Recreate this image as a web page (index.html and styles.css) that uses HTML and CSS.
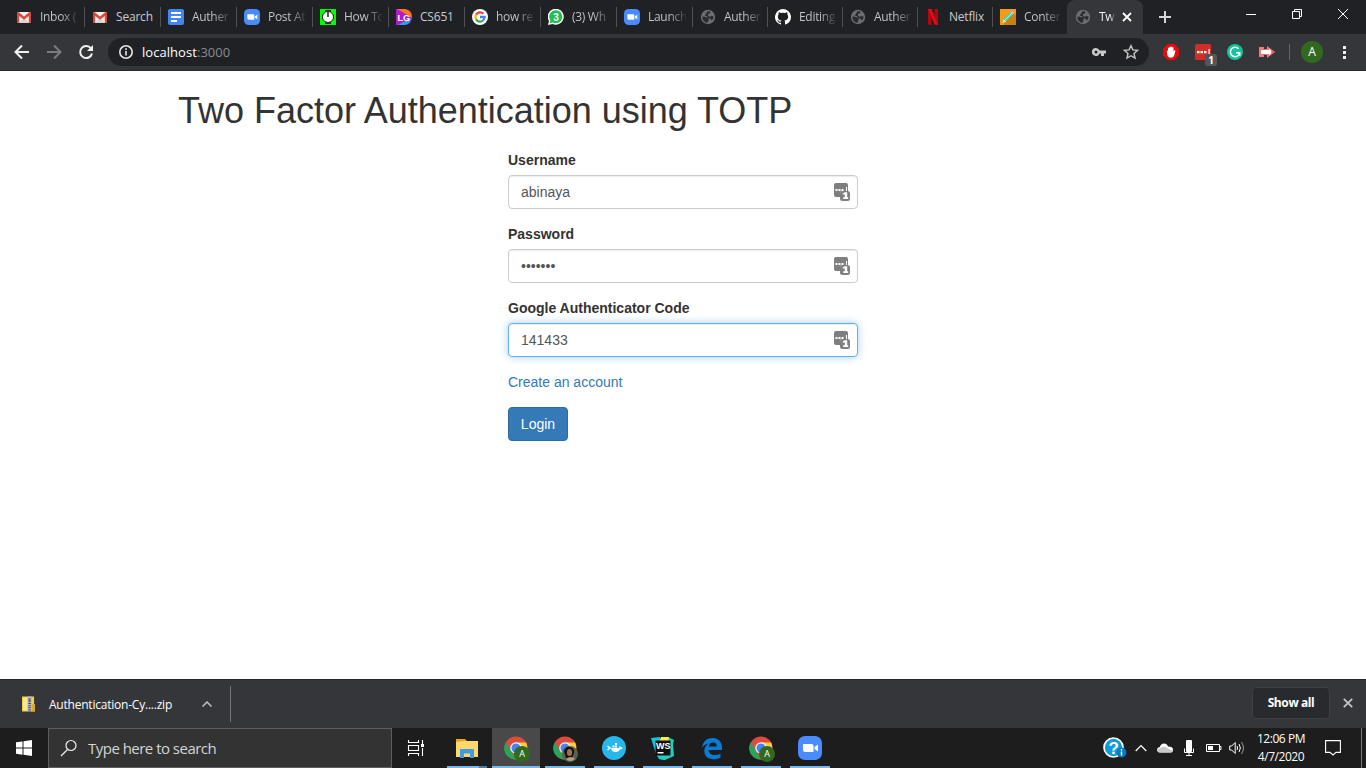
FILE: index.html
```html
<!DOCTYPE html>
<html lang="en">
<head>
<meta charset="utf-8">
<title>Two Factor Authentication</title>
<link rel="stylesheet" href="styles.css">
</head>
<body>
<svg class="defs" aria-hidden="true">
  <symbol id="gmail" viewBox="0 0 16 16"><path fill="#f3f0ef" d="M1 3h14v11H1z"/><path fill="#d9d4d3" d="M3 14l5-5 5 5z"/><path fill="#d54b3d" d="M1 14V3h1.500L8 7.500 13.500 3H15v11h-2.200V7L8 10.800 3.200 7v7z"/></symbol>
  <symbol id="zoomapp" viewBox="0 0 24 24"><rect width="24" height="24" rx="7" fill="#4a8cff"/><path fill="#fff" d="M5 8h8.500q2 0 2 2v6H7q-2 0-2-2zM16.500 11l3.500-2.500v7L16.500 13z"/></symbol>
  <symbol id="globe" viewBox="0 0 16 16"><circle cx="8" cy="8" r="7.200" fill="#6a6d71"/><path fill="#292b2f" d="M2.500 7.500c2 .2 2.500.2 4 .7 1.800.3 3 .8 2.200 2.300L7.500 13.800C4.500 13.500 2 11 2.500 7.500zM7.500 2.200l3 .3-.5 1.800-2 .7v1.700l1.500 1 2-.7 2 .5-.2 2-1.600 2-1.200-2-2-.6-1.500-1.700-2.200-.8z"/></symbol>
  <symbol id="chrome" viewBox="0 0 24 24"><circle cx="12" cy="12" r="11.500" fill="#dd4b3f"/><path fill="#26a65b" d="M2 6.300L8 17l4 6.500C3 23.500-3 14 2 6.300z"/><path fill="#ffcd40" d="M12 6.500h10.100c3.700 8-2 17-10.100 17l5-8.500z"/><circle cx="12" cy="12" r="5.800" fill="#f3f3f3"/><circle cx="12" cy="12" r="4.500" fill="#4285f4"/></symbol>
  <symbol id="lastpass" viewBox="0 0 16 18"><path fill="#7f7f7f" d="M2 0h10q2 0 2 2v6h-5.500q-2.500 0-2.500 2.500V14H2q-2 0-2-2V2q0-2 2-2z"/><rect x="6" y="8" width="10" height="10" rx="2.500" fill="#7f7f7f"/><path fill="#fff" d="M1.500 6h2v2h-2zM4.500 6h2v2h-2zM7.500 6h2v2h-2zM12 4h1v4h-1zM8.700 10.500l2-1.200h2.500v5h1v1.700h-5v-1.700h1.600v-2.800H8.700z"/></symbol>
</svg>

<header class="tabstrip">
  <div class="tab"><svg class="fav"><use href="#gmail"/></svg><span class="title">Inbox (</span></div>
  <div class="tab"><svg class="fav"><use href="#gmail"/></svg><span class="title plain">Search</span></div>
  <div class="tab"><svg class="fav" viewBox="0 0 16 16"><rect width="16" height="16" rx="2" fill="#4285f4"/><path fill="#fff" d="M3 3h10v2H3zM3 7h10v2H3zM3 11h6v2H3z"/></svg><span class="title">Auther</span></div>
  <div class="tab"><svg class="fav"><use href="#zoomapp"/></svg><span class="title">Post At</span></div>
  <div class="tab"><svg class="fav" viewBox="0 0 16 16"><path fill="#0f0" d="M0 0h16v16H0z"/><path fill="#333" d="M5 1h6v2l3 3v4l-3 3v2H5v-2l-3-3V6l3-3z"/><circle cx="8" cy="8" r="5" fill="#fff"/><path stroke="#222" stroke-width="1.500" d="M8 3v5"/></svg><span class="title">How To</span></div>
  <div class="tab"><svg class="fav" viewBox="0 0 16 16"><path fill="#b01ad0" d="M0 0h9q7 1 7 8t-7 8H0z"/><path fill="#ff7918" d="M1 0h8q7 1 7 9L8 4z"/><path fill="#17afe5" d="M2 16l13-7q-1 7-7 7z"/><text x="1.500" y="11.500" class="logo-text">LG</text></svg><span class="title plain">CS651</span></div>
  <div class="tab"><svg class="fav" viewBox="0 0 16 16"><circle cx="8" cy="8" r="8" fill="#fff"/><g fill="none" stroke-width="2.300"><path stroke="#ea4335" d="M4 5.700A4.600 4.600 0 0 1 11.300 4.800"/><path stroke="#fbbc05" d="M4 5.700a4.700 4.700 0 0 0 0 4.600"/><path stroke="#34a853" d="M4 10.300a4.600 4.600 0 0 0 7 1.200"/><path stroke="#4285f4" d="M8 8h4.600a4.600 4.600 0 0 1-1.600 3.500"/></g></svg><span class="title">how re</span></div>
  <div class="tab"><svg class="fav" viewBox="0 0 16 16"><path fill="#fff" d="M0 16l1-4A8 8 0 1 1 4.500 15z"/><path fill="#20bd50" d="M1.700 14.300l.8-2.700A6.500 6.500 0 1 1 4.700 13.500z"/><text x="5.200" y="11.800" class="count">3</text></svg><span class="title">(3) Wh</span></div>
  <div class="tab"><svg class="fav"><use href="#zoomapp"/></svg><span class="title">Launch</span></div>
  <div class="tab narrow"><svg class="fav"><use href="#globe"/></svg><span class="title">Auther</span></div>
  <div class="tab narrow"><svg class="fav" viewBox="0 0 16 16"><path fill="#fff" d="M8 0a8 8 0 0 0-2.500 15.600c.4.100.5-.2.500-.4v-1.500c-2.200.5-2.700-1-2.700-1-.3-.9-.9-1.200-.9-1.200-.7-.5.100-.5.100-.5.800.1 1.200.8 1.200.8.700 1.200 1.900.9 2.300.7.100-.5.300-.9.500-1.100-1.800-.2-3.600-.9-3.600-4 0-.9.300-1.600.8-2.100-.1-.2-.4-1 .1-2.100 0 0 .7-.2 2.200.8a8 8 0 0 1 4 0c1.500-1 2.200-.8 2.200-.8.400 1.100.2 1.900.1 2.100.5.600.8 1.300.8 2.100 0 3.100-1.900 3.700-3.700 3.900.3.300.6.800.6 1.500v2.400c0 .2.100.5.500.4A8 8 0 0 0 8 0z"/></svg><span class="title">Editing</span></div>
  <div class="tab narrow"><svg class="fav"><use href="#globe"/></svg><span class="title">Auther</span></div>
  <div class="tab narrow"><svg class="fav" viewBox="0 0 16 16"><path fill="#b20710" d="M3 0h3.500v16L3 15.500zM9.500 0H13v16l-3.500-.5z"/><path fill="#e50914" d="M3 0h3.500L13 16l-3.500-.5z"/></svg><span class="title plain">Netflix</span></div>
  <div class="tab narrow last"><svg class="fav" viewBox="0 0 16 16"><path fill="#f39c1c" d="M0 0h16v16H0z"/><path fill="#cf7f0c" d="M4 14L14 4l2 2v10H4z"/><path fill="#f8e1b0" d="M2.500 14l1.200-4L6.500 12.500z"/><path fill="#43d0b0" d="M3.500 10l7-7L13 5.500l-7 7z"/><path fill="#f3a2d0" d="M10.500 3l1.500-1.300L14.300 4 13 5.500z"/><path stroke="#d9fff2" stroke-width=".8" d="M5 11l7-7"/></svg><span class="title">Conter</span></div>
  <div class="tab active"><svg class="fav"><use href="#globe"/></svg><span class="title">Two</span><svg class="close" viewBox="0 0 10 10"><path d="M1 1l8 8M9 1L1 9"/></svg></div>
  <svg class="newtab" viewBox="0 0 12 12"><path d="M6 0v12M0 6h12"/></svg>
  <div class="window-buttons">
    <svg viewBox="0 0 12 12"><path d="M1 6.500h10"/></svg>
    <svg viewBox="0 0 12 12"><path d="M1.500 3.500h7v7h-7zM3.500 3V1.500h7v7H9"/></svg>
    <svg viewBox="0 0 12 12"><path d="M1 1l10 10M11 1L1 11"/></svg>
  </div>
</header>

<nav class="toolbar">
  <svg class="nav-icon" viewBox="0 0 16 16"><path d="M15 8H2M8 1.500L1.500 8 8 14.500"/></svg>
  <svg class="nav-icon dim" viewBox="0 0 16 16"><path d="M1 8h13M8 1.500L14.500 8 8 14.500"/></svg>
  <svg class="nav-icon" viewBox="0 0 16 16"><path d="M13 4.500A6 6 0 1 0 14 9.500"/><path class="solid" d="M15 1v6H9z"/></svg>
  <div class="omnibox">
    <svg class="info" viewBox="0 0 14 14"><circle cx="7" cy="7" r="6.200"/><path d="M7 6v4.500M7 3.300v1.600"/></svg>
    <span class="url">localhost<span class="port">:3000</span></span>
    <svg class="key" viewBox="0 0 14 8"><path fill="#c8c9cb" fill-rule="evenodd" d="M4 0a4 4 0 1 0 3.600 5.500H9V8h3V5.500h2v-3H7.600A4 4 0 0 0 4 0zm0 2.500a1.500 1.500 0 1 1 0 3 1.500 1.500 0 0 1 0-3z"/></svg>
    <svg class="star" viewBox="0 0 16 16"><path d="M8 1.700l1.900 4.200 4.500.5-3.400 3.100 1 4.500-4-2.300L4 14l1-4.500-3.400-3.100 4.500-.5z"/></svg>
  </div>
  <div class="extensions">
    <svg class="ext" viewBox="0 0 16 16"><path fill="#e40d0d" d="M4.700 0h6.600L16 4.700v6.600L11.300 16H4.700L0 11.300V4.700z"/><path fill="#fff" d="M5 4q1-.7 1.300.2V3Q7 2 7.700 3q.8-1 1.500.2 1-.4 1.300.8v3.500q1.500-2 2-.7L11 12q-1 1.700-3 1.700-3 0-3.700-3.200L3.800 7Q4 6 5 7z"/></svg>
    <div class="pass-ext"><svg class="ext" viewBox="0 0 16 16"><rect width="16" height="16" rx="1.500" fill="#d32d27"/><path fill="#fff" d="M2 7h2.500v2.300H2zM5.500 7H8v2.300H5.500zM9 7h2.500v2.300H9zM13.500 5h1.200v5h-1.200z"/></svg><span class="badge">1</span></div>
    <svg class="ext" viewBox="0 0 16 16"><circle cx="8" cy="8" r="8" fill="#15c39a"/><path fill="none" stroke="#fff" stroke-width="1.500" d="M11.500 4.700A4.700 4.700 0 1 0 12.700 8.800H9M12.700 8.800v3"/></svg>
    <svg class="ext" viewBox="0 0 16 16"><path fill="#f47b7b" d="M0 3h5v2h3V2l8 6-8 6v-3H5v2H0z"/><path fill="#fff" d="M2 6h8V4.500L13 8l-3 3.500V10H2z"/><path fill="#f05b5b" d="M4 5h2v1H4zM4 10h2v1H4zM12.500 6L16 8l-3.500 2z"/></svg>
  </div>
  <span class="divider"></span>
  <span class="avatar">A</span>
  <svg class="dots" viewBox="0 0 3 13"><path d="M0 0h3v3H0zM0 5h3v3H0zM0 10h3v3H0z"/></svg>
</nav>

<main class="page">
  <h1>Two Factor Authentication using TOTP</h1>
  <form class="login">
    <label>Username</label>
    <div class="field">abinaya<svg class="manager"><use href="#lastpass"/></svg></div>
    <label>Password</label>
    <div class="field"><span class="password">•••••••</span><svg class="manager"><use href="#lastpass"/></svg></div>
    <label>Google Authenticator Code</label>
    <div class="field focused">141433<svg class="manager"><use href="#lastpass"/></svg></div>
    <a class="create">Create an account</a>
    <button type="button">Login</button>
  </form>
</main>

<section class="downloads">
  <svg class="zip" viewBox="0 0 14 16"><path fill="#f4cc4c" d="M0 0h13v8h1v8H0z"/><path fill="#ffe592" d="M1 1h5v14H1z"/><path fill="#d8a724" d="M11 8h3v8h-3z"/><path fill="#b8bbbe" d="M6 0h4.500v16H6z"/><path stroke="#4c5055" stroke-dasharray="1 1" stroke-width="3" d="M8.200 7v9"/><path fill="#5b6065" d="M7 2h2.300v4H7z"/></svg>
  <span class="filename">Authentication-Cy....zip</span>
  <svg class="caret" viewBox="0 0 10 6"><path d="M.5 5.500L5 1l4.500 4.500"/></svg>
  <span class="download-rule"></span>
  <span class="showall">Show all</span>
  <svg class="dismiss" viewBox="0 0 10 10"><path d="M.8.800l8.400 8.400M9.200.800L.8 9.200"/></svg>
</section>

<footer class="taskbar">
  <div class="start"><svg viewBox="0 0 16 16"><path fill="#fff" d="M0 2.300l6.500-.9v6.100H0zM7.500 1.200L16 0v7.500H7.500zM0 8.500h6.500v6.200L0 13.800zM7.500 8.500H16V16l-8.500-1.200z"/></svg></div>
  <div class="search"><svg viewBox="0 0 18 18"><circle cx="11" cy="6.500" r="5"/><path d="M7.500 10.500L1 17"/></svg><span>Type here to search</span></div>
  <div class="taskview"><svg viewBox="0 0 18 16"><path d="M1.500 0v2.500h10V0M1.500 5.500h10v5h-10zM1.500 16v-2.500h10V16M15.500 0v4M15.500 8v8"/><path fill="#fff" stroke="none" d="M14 4h3v3h-3z"/></svg></div>
  <div class="apps">
    <div class="app grouped"><svg viewBox="0 0 24 24"><path fill="#e5a621" d="M1 3h9l2 2v5H1z"/><path fill="#ffd96a" d="M1 6l9-1h13v16H1z"/><path fill="#3d9ce3" d="M5 13h14v9h-4v-4.500H9V22H5z"/></svg></div>
    <div class="app current"><svg><use href="#chrome"/></svg><span class="profile">A</span></div>
    <div class="app"><svg><use href="#chrome"/></svg><svg class="photo" viewBox="0 0 16 16"><circle cx="8" cy="8" r="8" fill="#59634a"/><path fill="#17120f" d="M2 5Q4 0 8 1q5 1 4 6l-2 5H4z"/><ellipse cx="7.500" cy="6.500" rx="2.600" ry="3.500" fill="#a26f52"/><path fill="#b59b8a" d="M4 13q5-4 9 0-5 4-9 0z"/></svg></div>
    <div class="app"><svg viewBox="0 0 24 24"><circle cx="12" cy="12" r="12" fill="#27b8eb"/><path fill="none" stroke="#fff" stroke-width="1.500" d="M5.500 10l2.500 2-2.500 2"/><path fill="#fff" d="M9 12h8l.5-2 1.500 1.500h2q-1 2-3 2-1.500 2.500-4.500 2.500Q9.500 16 9 12zM10.500 9.500h2v2h-2zM13 9.500h2v2h-2zM13 7h2v2h-2z"/></svg></div>
    <div class="app"><svg viewBox="0 0 24 24"><path fill="#19c5d9" d="M0 2l9-1 4 19 1 4-6-1-3-5z"/><path fill="#20cfc0" d="M17 1l6 3-1 4 1 12-9 4-6-1z"/><path fill="#f5f04b" d="M10 1h8l-1 6H8z"/><path fill="#101010" d="M4.500 4.500h15v15h-15z"/><text x="5" y="12.800" class="ws">WS</text><path fill="#fff" d="M6.500 16h6v1.500h-6z"/></svg></div>
    <div class="app"><svg viewBox="0 0 24 24"><path fill="#087bd5" d="M2 12C3 5 7 2 12.500 2 19 2 22 6.500 22 11v3H8.500c.2 3.500 3 5 6 5 2.500 0 4.500-.7 6-1.600v4.200c-2 1.100-4.500 1.600-7 1.600C8 23.200 4.300 20 4.300 15c0-3.500 1.800-6 4.500-7.500C5.500 7.800 3.500 9.500 2 12zm6.800-1.600h8c0-2.700-1.300-4-3.800-4-2.300 0-3.800 1.500-4.200 4z"/></svg></div>
    <div class="app"><svg><use href="#chrome"/></svg><span class="profile">A</span></div>
    <div class="app"><svg><use href="#zoomapp"/></svg></div>
  </div>
  <div class="tray">
    <svg class="help" viewBox="0 0 24 22"><circle cx="10.500" cy="10.500" r="9.500" fill="#109bd8" stroke="#fff" stroke-width="1.700"/><text x="5.400" y="16.500" class="help-mark">?</text><circle cx="18.500" cy="15.500" r="5" fill="#087bc0"/><path stroke="#fff" stroke-width="1.400" d="M18.500 14.500v4M18.500 12v1.500"/></svg>
    <svg class="up" viewBox="0 0 12 8"><path fill="none" stroke="#fff" stroke-width="1.200" d="M.7 7L6 1.500 11.300 7"/></svg>
    <svg class="cloud" viewBox="0 0 16 10"><path fill="#fff" d="M3 9.500Q0 9 0 6.700 0 4.500 2.700 4 4 .5 7 .500 10 .500 11 3.500q5 0 5 3.300 0 2.200-2 2.700z"/><path fill="#c9c9c9" d="M5 4q3-1 5 1l6 3q-.7 1.500-2 1.500H3Q0 9 0 6.700z"/></svg>
    <svg class="mic" viewBox="0 0 12 16"><rect x="3" width="6" height="12" rx="1" fill="#fff"/><path fill="none" stroke="#fff" d="M1.500 8.500v4h9v-4M6 12v3M3 15.500h6"/></svg>
    <svg class="battery" viewBox="0 0 16 10"><path fill="none" stroke="#fff" d="M.5 1.500h13v7H.500zM14 3.500h1v3h-1"/><path fill="#fff" d="M2 3h5v4H2z"/></svg>
    <svg class="volume" viewBox="0 0 16 14"><path fill="none" stroke="#fff" d="M.7 5h2l3.500-3.500v11L2.700 9h-2zM8 5q1.200 2 0 4M10 3q2.700 4 0 8"/><path fill="none" stroke="#999" d="M12.500 1q4 6 0 12"/></svg>
    <div class="clock">12:06 PM<br>4/7/2020</div>
    <svg class="notice" viewBox="0 0 16 16"><path fill="none" stroke="#fff" stroke-width="1.100" d="M.6.600h14.800v11.800H11L8 15l-3-2.600H.600z"/></svg>
  </div>
</footer>
</body>
</html>
```
FILE: styles.css
```css
* { box-sizing: border-box; }
body { margin: 0; width: 1366px; height: 768px; overflow: hidden; display: flex; flex-direction: column; font-family: "Liberation Sans", Arial, sans-serif; background: #fff; }
svg { display: block; flex: none; }
.defs { display: none; }
.tabstrip { height: 34px; flex: none; display: flex; background: #202124; padding-left: 9px; font: 12px "Open Sans", sans-serif; color: #c7cbd0; }
.tab { width: 76px; height: 34px; flex: none; display: flex; align-items: center; padding: 0 7px; background: linear-gradient(#505154, #505154) right 7px / 1px 20px no-repeat; }
.narrow { width: 75px; }
.last { width: 74px; background: none; }
.fav { width: 16px; height: 16px; margin-right: 8px; }
.title { width: 38px; height: 18px; line-height: 18px; overflow: hidden; white-space: nowrap; letter-spacing: -.3px; color: transparent; background: linear-gradient(90deg, #c7cbd0 55%, rgba(199,203,208,.1)); background-clip: text; }
.title.plain { background: none; color: #c7cbd0; letter-spacing: -.2px; }
.active { padding-left: 8px; background: #35363a; border-radius: 8px 8px 0 0; }
.active .title { width: 16px; color: transparent; background: linear-gradient(90deg, #fff 70%, transparent); background-clip: text; }
.close { width: 10px; height: 10px; margin-left: 7px; stroke: #fff; stroke-width: 1.8; }
.newtab { width: 12px; height: 12px; margin: 11px 0 0 16px; stroke: #d4d5d6; stroke-width: 2; }
.window-buttons { display: flex; gap: 34px; margin: 8px 0 0 74px; fill: none; stroke: #fff; stroke-width: 1; }
.window-buttons svg { width: 12px; height: 12px; }
.toolbar { height: 37px; flex: none; display: flex; align-items: center; background: #35363a; border-bottom: 1px solid #292a2d; padding-left: 14px; font-family: "Open Sans", sans-serif; }
.nav-icon { width: 16px; height: 16px; margin-right: 16px; fill: none; stroke: #f1f1f1; stroke-width: 2; }
.nav-icon:nth-child(3) { margin-right: 14px; }
.nav-icon.dim { stroke: #7b7c7f; }
.nav-icon .solid { fill: #f1f1f1; stroke: none; }
.omnibox { width: 1041px; height: 28px; display: flex; align-items: center; background: #202124; border-radius: 14px; padding: 0 10px 0 11px; color: #fff; font-size: 13px; }
.info { width: 14px; height: 14px; margin-right: 9px; fill: none; stroke: #e8e8e8; stroke-width: 1.6; }
.url { flex: 1; letter-spacing: 0.05px; line-height: 18px; }
.port { color: #888b8f; }
.key { width: 14px; height: 8px; margin-right: 17px; }
.star { width: 16px; height: 16px; fill: none; stroke: #c7c8ca; stroke-width: 1.4; }
.extensions { display: flex; gap: 16px; margin-left: 14px; }
.ext { width: 16px; height: 16px; }
.pass-ext { position: relative; }
.badge { position: absolute; left: 10px; top: 10px; width: 12px; height: 12px; border-radius: 2px; background: #565656; color: #fff; font: bold 10px/12px "Open Sans", sans-serif; text-align: center; }
.divider { width: 1px; height: 16px; margin: 0 11px 0 14px; background: #64656a; }
.avatar { width: 22px; height: 22px; border-radius: 50%; background: #33691e; color: #fff; font: 12px/22px "Open Sans", sans-serif; text-align: center; }
.dots { width: 3px; height: 13px; margin-left: 20px; fill: #f1f1f1; }
.page { flex: 1; padding: 20px 178px 0; color: #333; }
h1 { margin: 0 0 10px; font-size: 36px; line-height: 39.6px; font-weight: 500; letter-spacing: -.02px; }
.login { width: 350px; margin: 0 auto; padding-top: 9px; font-size: 14px; line-height: 20px; }
.login label { display: block; font-weight: bold; margin-bottom: 5px; }
.field { height: 34px; display: flex; align-items: center; justify-content: space-between; margin-bottom: 15px; padding: 0 7px 0 12px; border: 1px solid #ccc; border-radius: 4px; color: #555; background: #fff; box-shadow: inset 0 1px 1px rgba(0,0,0,.075); }
.focused { border-color: #66afe9; box-shadow: inset 0 1px 1px rgba(0,0,0,.075), 0 0 8px rgba(102,175,233,.6); }
.manager { width: 16px; height: 18px; }
.create { display: block; color: #337ab7; margin-bottom: 15px; }
.login button { display: block; height: 34px; width: 60px; padding: 0; border: 1px solid #2e6da4; border-radius: 4px; background: #337ab7; color: #fff; font: 14px "Liberation Sans", Arial, sans-serif; }
.downloads { height: 49px; flex: none; display: flex; align-items: center; background: #35363a; border-top: 1px solid #28292c; padding-left: 22px; font: 12px "Open Sans", sans-serif; color: #fff; }
.zip { width: 13px; height: 16px; margin: -1px 14px 0 0; }
.filename { width: 123px; white-space: nowrap; letter-spacing: -.22px; }
.caret { width: 10px; height: 6px; margin: 0 18px 0 30px; fill: none; stroke: #bfc0c2; stroke-width: 1.5; }
.download-rule { width: 1px; height: 36px; background: #757679; }
.showall { width: 78px; height: 32px; margin: -3px 13px 0 1021px; flex: none; border: 1px solid #3e3f43; border-radius: 4px; background: #292a2d; text-align: center; line-height: 30px; font-weight: 700; letter-spacing: -.4px; }
.dismiss { width: 10px; height: 10px; margin-top: -2px; stroke: #c4c5c7; stroke-width: 1.8; }
.taskbar { height: 40px; flex: none; display: flex; background: #1d1d1d; font-family: "Open Sans", sans-serif; color: #fff; }
.start { width: 48px; display: flex; align-items: center; justify-content: center; }
.start svg { width: 16px; height: 16px; }
.search { width: 344px; display: flex; align-items: center; gap: 10px; padding-left: 11px; border: 1px solid #5d5d5d; background: #333; color: #d4d4d4; font-size: 15px; letter-spacing: -.52px; }
.search svg { width: 18px; height: 18px; fill: none; stroke: #eee; stroke-width: 1.2; }
.taskview { width: 51px; display: flex; align-items: center; padding-left: 15px; }
.taskview svg { width: 18px; height: 16px; fill: none; stroke: #fff; stroke-width: 1.1; }
.apps { display: flex; gap: 1px; }
.app { position: relative; width: 48px; height: 40px; display: flex; align-items: center; justify-content: center; background: linear-gradient(#76b9ed, #76b9ed) center bottom / 40px 2px no-repeat; }
.app > svg { width: 24px; height: 24px; }
.grouped { background: linear-gradient(90deg, #76b9ed 32px, #517b9c 32px) center bottom / 40px 2px no-repeat; }
.current { background: linear-gradient(#76b9ed, #76b9ed) center bottom / 48px 2px no-repeat, #494949; }
.profile { position: absolute; left: 22px; top: 18px; width: 16px; height: 16px; border-radius: 50%; background: #33691e; font-size: 9px; line-height: 16px; text-align: center; }
.app .photo { position: absolute; left: 21px; top: 18px; width: 16px; height: 16px; }
.tray { display: flex; align-items: center; margin-left: auto; margin-right: 4px; padding-right: 20px; border-right: 1px solid #777; }
.help { width: 24px; height: 22px; margin-right: 8px; }
.up { width: 12px; height: 8px; margin-right: 10px; }
.cloud { width: 16px; height: 10px; margin-right: 10px; }
.mic { width: 12px; height: 16px; margin-right: 11px; }
.battery { width: 16px; height: 10px; margin-right: 7px; }
.volume { width: 16px; height: 14px; margin-right: 10px; }
.clock { width: 52px; height: 36px; font-size: 12px; line-height: 18px; letter-spacing: -.45px; text-align: center; white-space: nowrap; margin-right: 18px; }
.notice { width: 16px; height: 16px; }
.logo-text { font: bold 9px "Liberation Sans", sans-serif; fill: #fff; }
.count { font: bold 10px "Liberation Sans", sans-serif; fill: #fff; }
.ws { font: bold 9px "Liberation Sans", sans-serif; fill: #fff; }
.help-mark { font: bold 17px "Liberation Sans", sans-serif; fill: #fff; }
```
